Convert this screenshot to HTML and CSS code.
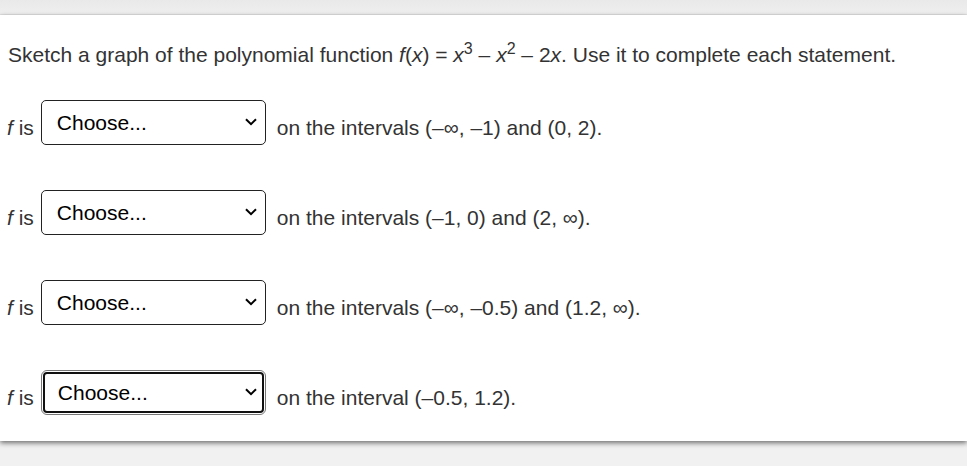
FILE: index.html
```html
<!DOCTYPE html>
<html>
<head>
<meta charset="utf-8">
<link rel="stylesheet" href="styles.css">
</head>
<body>
<div class="topbar"></div>
<div class="panel">
  <p class="question">Sketch a graph of the polynomial function <i>f</i>(<i>x</i>) = <i>x</i><sup>3</sup> – <i>x</i><sup>2</sup> – 2<i>x</i>. Use it to complete each statement.</p>
  <div class="rows">
    <div class="row">
      <span class="label"><i>f</i> is</span>
      <div class="dropdown">
        <select class="select"><option>Choose...</option><option>increasing</option><option>decreasing</option><option>concave up</option><option>concave down</option></select>
        <svg class="chev" width="12" height="8" viewBox="0 0 12 8"><path d="M1 1.2 L6 6.2 L11 1.2" fill="none" stroke="#000" stroke-width="2"/></svg>
      </div>
      <span class="label tail">on the intervals (–∞, –1) and (0, 2).</span>
    </div>
    <div class="row">
      <span class="label"><i>f</i> is</span>
      <div class="dropdown">
        <select class="select"><option>Choose...</option><option>increasing</option><option>decreasing</option><option>concave up</option><option>concave down</option></select>
        <svg class="chev" width="12" height="8" viewBox="0 0 12 8"><path d="M1 1.2 L6 6.2 L11 1.2" fill="none" stroke="#000" stroke-width="2"/></svg>
      </div>
      <span class="label tail">on the intervals (–1, 0) and (2, ∞).</span>
    </div>
    <div class="row">
      <span class="label"><i>f</i> is</span>
      <div class="dropdown">
        <select class="select"><option>Choose...</option><option>increasing</option><option>decreasing</option><option>concave up</option><option>concave down</option></select>
        <svg class="chev" width="12" height="8" viewBox="0 0 12 8"><path d="M1 1.2 L6 6.2 L11 1.2" fill="none" stroke="#000" stroke-width="2"/></svg>
      </div>
      <span class="label tail">on the intervals (–∞, –0.5) and (1.2, ∞).</span>
    </div>
    <div class="row">
      <span class="label"><i>f</i> is</span>
      <div class="dropdown focused">
        <select class="select"><option>Choose...</option><option>increasing</option><option>decreasing</option><option>concave up</option><option>concave down</option></select>
        <svg class="chev" width="12" height="8" viewBox="0 0 12 8"><path d="M1 1.2 L6 6.2 L11 1.2" fill="none" stroke="#000" stroke-width="2"/></svg>
      </div>
      <span class="label tail">on the interval (–0.5, 1.2).</span>
    </div>
  </div>
</div>
</body>
</html>
```
FILE: styles.css
```css
html, body {
  margin: 0;
  padding: 0;
}
body {
  background: #f1f1f1;
  font-family: "Liberation Sans", Arial, sans-serif;
  color: #333;
  width: 967px;
  height: 466px;
  overflow: hidden;
}
.topbar {
  height: 15px;
  background: linear-gradient(#e9e9e9, #efefef);
  border-bottom: 1px solid #e3e3e3;
  box-sizing: border-box;
}
.panel {
  background: #fff;
  height: 426px;
  box-sizing: border-box;
  padding: 28px 0 0 8px;
  box-shadow: 0 2px 5px rgba(0, 0, 0, 0.55);
}
.question {
  margin: 0;
  font-size: 21px;
  line-height: 24px;
}
.question sup {
  font-size: 16px;
  line-height: 0;
  vertical-align: 8px;
}
.rows {
  margin-top: 33px;
  margin-left: -1px;
  display: flex;
  flex-direction: column;
  gap: 45px;
}
.row {
  display: flex;
  align-items: flex-start;
  height: 45px;
}
.label {
  font-size: 21px;
  line-height: 24px;
  margin-top: 16px;
  white-space: nowrap;
}
.tail {
  margin-left: 11px;
}
.dropdown {
  position: relative;
  width: 225px;
  height: 45px;
  margin-left: 7px;
  box-sizing: border-box;
}
.select {
  appearance: none;
  -webkit-appearance: none;
  width: 100%;
  height: 100%;
  margin: 0;
  box-sizing: border-box;
  border: 1px solid #222;
  border-radius: 5px;
  background: #fff;
  color: #000;
  font-family: "Liberation Sans", Arial, sans-serif;
  font-size: 21px;
  padding: 0 0 0 15px;
  outline: none;
}
.chev {
  position: absolute;
  right: 9px;
  top: 18px;
}
.focused {
  border: 1px solid #777;
  border-radius: 6px;
  padding: 1px;
}
.focused .select {
  border: 2px solid #111;
  border-radius: 4px;
  padding-left: 13px;
}
.focused .chev {
  right: 8px;
  top: 17px;
}
```
